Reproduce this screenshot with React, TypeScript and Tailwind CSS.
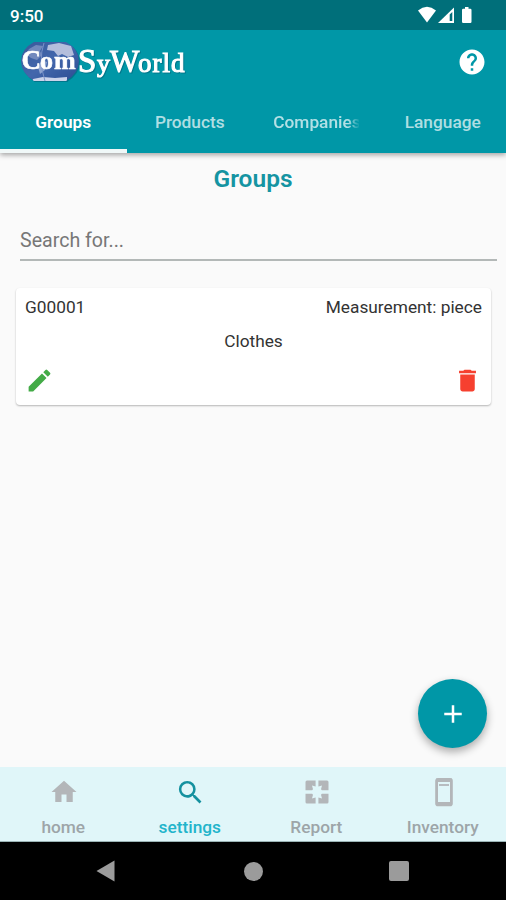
import type { ReactNode } from "react";
import { MdAdd, MdDelete, MdEdit, MdHelp, MdHome, MdSearch } from "react-icons/md";

interface NavItem {
  label: string;
  icon: ReactNode;
  active?: boolean;
}

const groups = [{ id: "G00001", measurement: "piece", name: "Clothes" }];

const navItems: NavItem[] = [
  { label: "home", icon: <MdHome size={30} /> },
  { label: "settings", icon: <MdSearch size={31} />, active: true },
  { label: "Report", icon: <ReportIcon /> },
  { label: "Inventory", icon: <InventoryIcon /> },
];

function ReportIcon() {
  return (
    <svg width="24" height="24" viewBox="0 0 24 24" fill="currentColor">
      <path d="M0.5 2q0-1.5 1.5-1.5h8.6v5.9l-3.6-.8 1 3.7-.9.9H0.5z" />
      <path d="M23.5 2q0-1.5-1.5-1.5h-8.6v5.9l3.6-.8-1 3.7.9.9h6.6z" />
      <path d="M0.5 22q0 1.5 1.5 1.5h8.6v-5.9l-3.6.8 1-3.7-.9-.9H0.5z" />
      <path d="M23.5 22q0 1.5-1.5 1.5h-8.6v-5.9l3.6.8-1-3.7.9-.9h6.6z" />
    </svg>
  );
}

function InventoryIcon() {
  return (
    <svg width="20" height="30" viewBox="0 0 20 30">
      <rect x="2.6" y="2.4" width="14.8" height="25.4" rx="1.4" fill="none" stroke="currentColor" strokeWidth="2.8" />
      <path d="M2 3.2h16M2 26.6h16" stroke="currentColor" strokeWidth="3.4" />
      <path d="M5 8h10" stroke="currentColor" strokeWidth="1.8" />
    </svg>
  );
}

function StatusBar() {
  return (
    <div className="flex h-[30px] items-center justify-between bg-[#006f7a] pl-[10px] pr-[32px] text-white">
      <span className="mt-[2px] text-[17px] font-medium leading-none">9:50</span>
      <svg width="56" height="18" viewBox="0 0 56 18" fill="currentColor">
        <path d="M0 4.5Q9 -2.8 18 4.5L9 16.5Z" />
        <path d="M20 17L36 1.5V17Z" />
        <path d="M31.7 8.5L34.3 6V15H31.7Z" fill="#006f7a" />
        <path d="M47 1h3.5v1.7h1.8q1.2 0 1.2 1.2v11.9q0 1.2-1.2 1.2h-7.1q-1.2 0-1.2-1.2v-11.9q0-1.2 1.2-1.2h1.8z" />
      </svg>
    </div>
  );
}

function Logo() {
  return (
    <svg width="170" height="42" viewBox="0 0 170 42" className="drop-shadow-[1px_1px_0_rgba(0,60,90,0.35)]">
      <defs>
        <clipPath id="globe">
          <path d="M14 1h32q13 7 13 19t-13 20H14Q1 32 1 20T14 1z" />
        </clipPath>
        <linearGradient id="sea" x1="0" y1="0" x2="1" y2="1">
          <stop offset="0" stopColor="#38599a" />
          <stop offset="0.5" stopColor="#4367ac" />
          <stop offset="1" stopColor="#2a4b90" />
        </linearGradient>
        <filter id="soft">
          <feGaussianBlur stdDeviation="0.7" />
        </filter>
      </defs>
      <g clipPath="url(#globe)">
        <rect width="60" height="42" fill="url(#sea)" />
        <g filter="url(#soft)">
          <path d="M9 8l7-4 7 1-3 5 2 4-5 5-6-2-5-4z" fill="#7289bd" />
          <path d="M28 4l11-2 12 3 3 9-6 2-6-3-4 2-4-5-7-1z" fill="#b4bedc" />
          <path d="M22 19l5 2-2 8-5 4-2-7z" fill="#8ea4d0" />
          <path d="M13 38l10-2 12 1 12-1v6H12z" fill="#cbd3ea" />
          <path d="M24 2q-6 17 1 38" stroke="#7b93c8" fill="none" />
        </g>
      </g>
      <g fill="#fff" stroke="#fff" className="font-['Liberation_Serif',serif]">
        <text y="27.5" fontWeight="700" strokeWidth="0.6">
          <tspan x="1.5" fontSize="27">C</tspan>
          <tspan x="20" fontSize="26" letterSpacing="0.9">om</tspan>
        </text>
        <text y="30.5" strokeWidth="1.1">
          <tspan x="58" fontSize="33">S</tspan>
          <tspan x="77" fontSize="26">y</tspan>
          <tspan x="90" fontSize="31">W</tspan>
          <tspan x="118" fontSize="27" letterSpacing="1">orld</tspan>
        </text>
      </g>
    </svg>
  );
}

function Tabs() {
  return (
    <div className="grid h-[59px] grid-cols-4 text-center text-[17.3px] font-medium leading-[20px] text-white/70">
      <div className="border-b-[4px] border-[#f0f8f8] pt-[18px] font-semibold text-white">Groups</div>
      <div className="pt-[18px]">Products</div>
      <div className="flex justify-center pt-[18px]">
        <span className="w-[86px] overflow-hidden whitespace-nowrap text-left [mask-image:linear-gradient(to_right,black_75px,transparent_87px)]">
          Companies
        </span>
      </div>
      <div className="pt-[18px]">Language</div>
    </div>
  );
}

function GroupCard({ id, measurement, name }: (typeof groups)[number]) {
  return (
    <div className="ml-[16px] mr-[15px] flex h-[117px] flex-col rounded-[4px] bg-white px-[9px] pt-[9px] text-[17.3px] leading-[20px] text-[#333] shadow-[0_1px_2px_rgba(0,0,0,0.28)]">
      <div className="flex justify-between">
        <span>{id}</span>
        <span>Measurement: {measurement}</span>
      </div>
      <div className="mt-[14px] text-center">{name}</div>
      <div className="mt-[15px] flex justify-between">
        <MdEdit size={29} className="text-[#43ab47]" />
        <MdDelete size={29} className="text-[#f6402f]" />
      </div>
    </div>
  );
}

function BottomNav() {
  return (
    <nav className="grid h-[75px] shrink-0 grid-cols-4 border-b border-[#9bb4b6] bg-[#e0f6f9]">
      {navItems.map((item) => (
        <div key={item.label} className={`flex flex-col items-center ${item.active ? "text-[#14919f]" : "text-[#b3b6b9]"}`}>
          <div className="ml-[2px] mt-[9px] flex h-[32px] items-center">{item.icon}</div>
          <span
            className={`mt-[9px] text-[17.3px] font-medium leading-[20px] ${item.active ? "text-[#22b4cb]" : "text-[#9da5a8]"}`}
          >
            {item.label}
          </span>
        </div>
      ))}
    </nav>
  );
}

function SystemBar() {
  return (
    <div className="flex h-[58px] shrink-0 items-center justify-between bg-black pl-[96px] pr-[97px] text-[#9b9b9b]">
      <svg width="19" height="22" viewBox="0 0 19 22" fill="currentColor">
        <path d="M0.5 11L18.5 0.5V21.5Z" />
      </svg>
      <div className="ml-[2px] size-[19px] rounded-full bg-current" />
      <div className="size-[20px] rounded-[2px] bg-current" />
    </div>
  );
}

export default function App() {
  return (
    <div className="flex h-[900px] w-[506px] flex-col overflow-hidden bg-[#fafafa] font-[Roboto,sans-serif]">
      <header className="relative shrink-0 bg-[#0097a7] shadow-[0_2px_5px_rgba(0,0,0,0.35)]">
        <StatusBar />
        <div className="flex h-[64px] items-center justify-between pl-[20px] pr-[19px]">
          <Logo />
          <MdHelp size={30} className="text-white" />
        </div>
        <Tabs />
      </header>
      <main className="relative flex-1">
        <h1 className="mt-[11px] text-center text-[24.5px] font-semibold leading-[30px] text-[#1594a2]">Groups</h1>
        <div className="mb-[27px] ml-[20px] mr-[9px] mt-[31px] h-[36px] border-b-2 border-[#b3b8b7] pt-[4px] text-[19.6px] leading-[24px] text-[#777]">
          Search for...
        </div>
        {groups.map((group) => (
          <GroupCard key={group.id} {...group} />
        ))}
        <button className="absolute bottom-[19px] right-[19px] flex size-[69px] items-center justify-center rounded-full bg-[#0097a7] text-white shadow-[0_4px_9px_rgba(0,0,0,0.32)]">
          <MdAdd size={30} />
        </button>
      </main>
      <BottomNav />
      <SystemBar />
    </div>
  );
}
